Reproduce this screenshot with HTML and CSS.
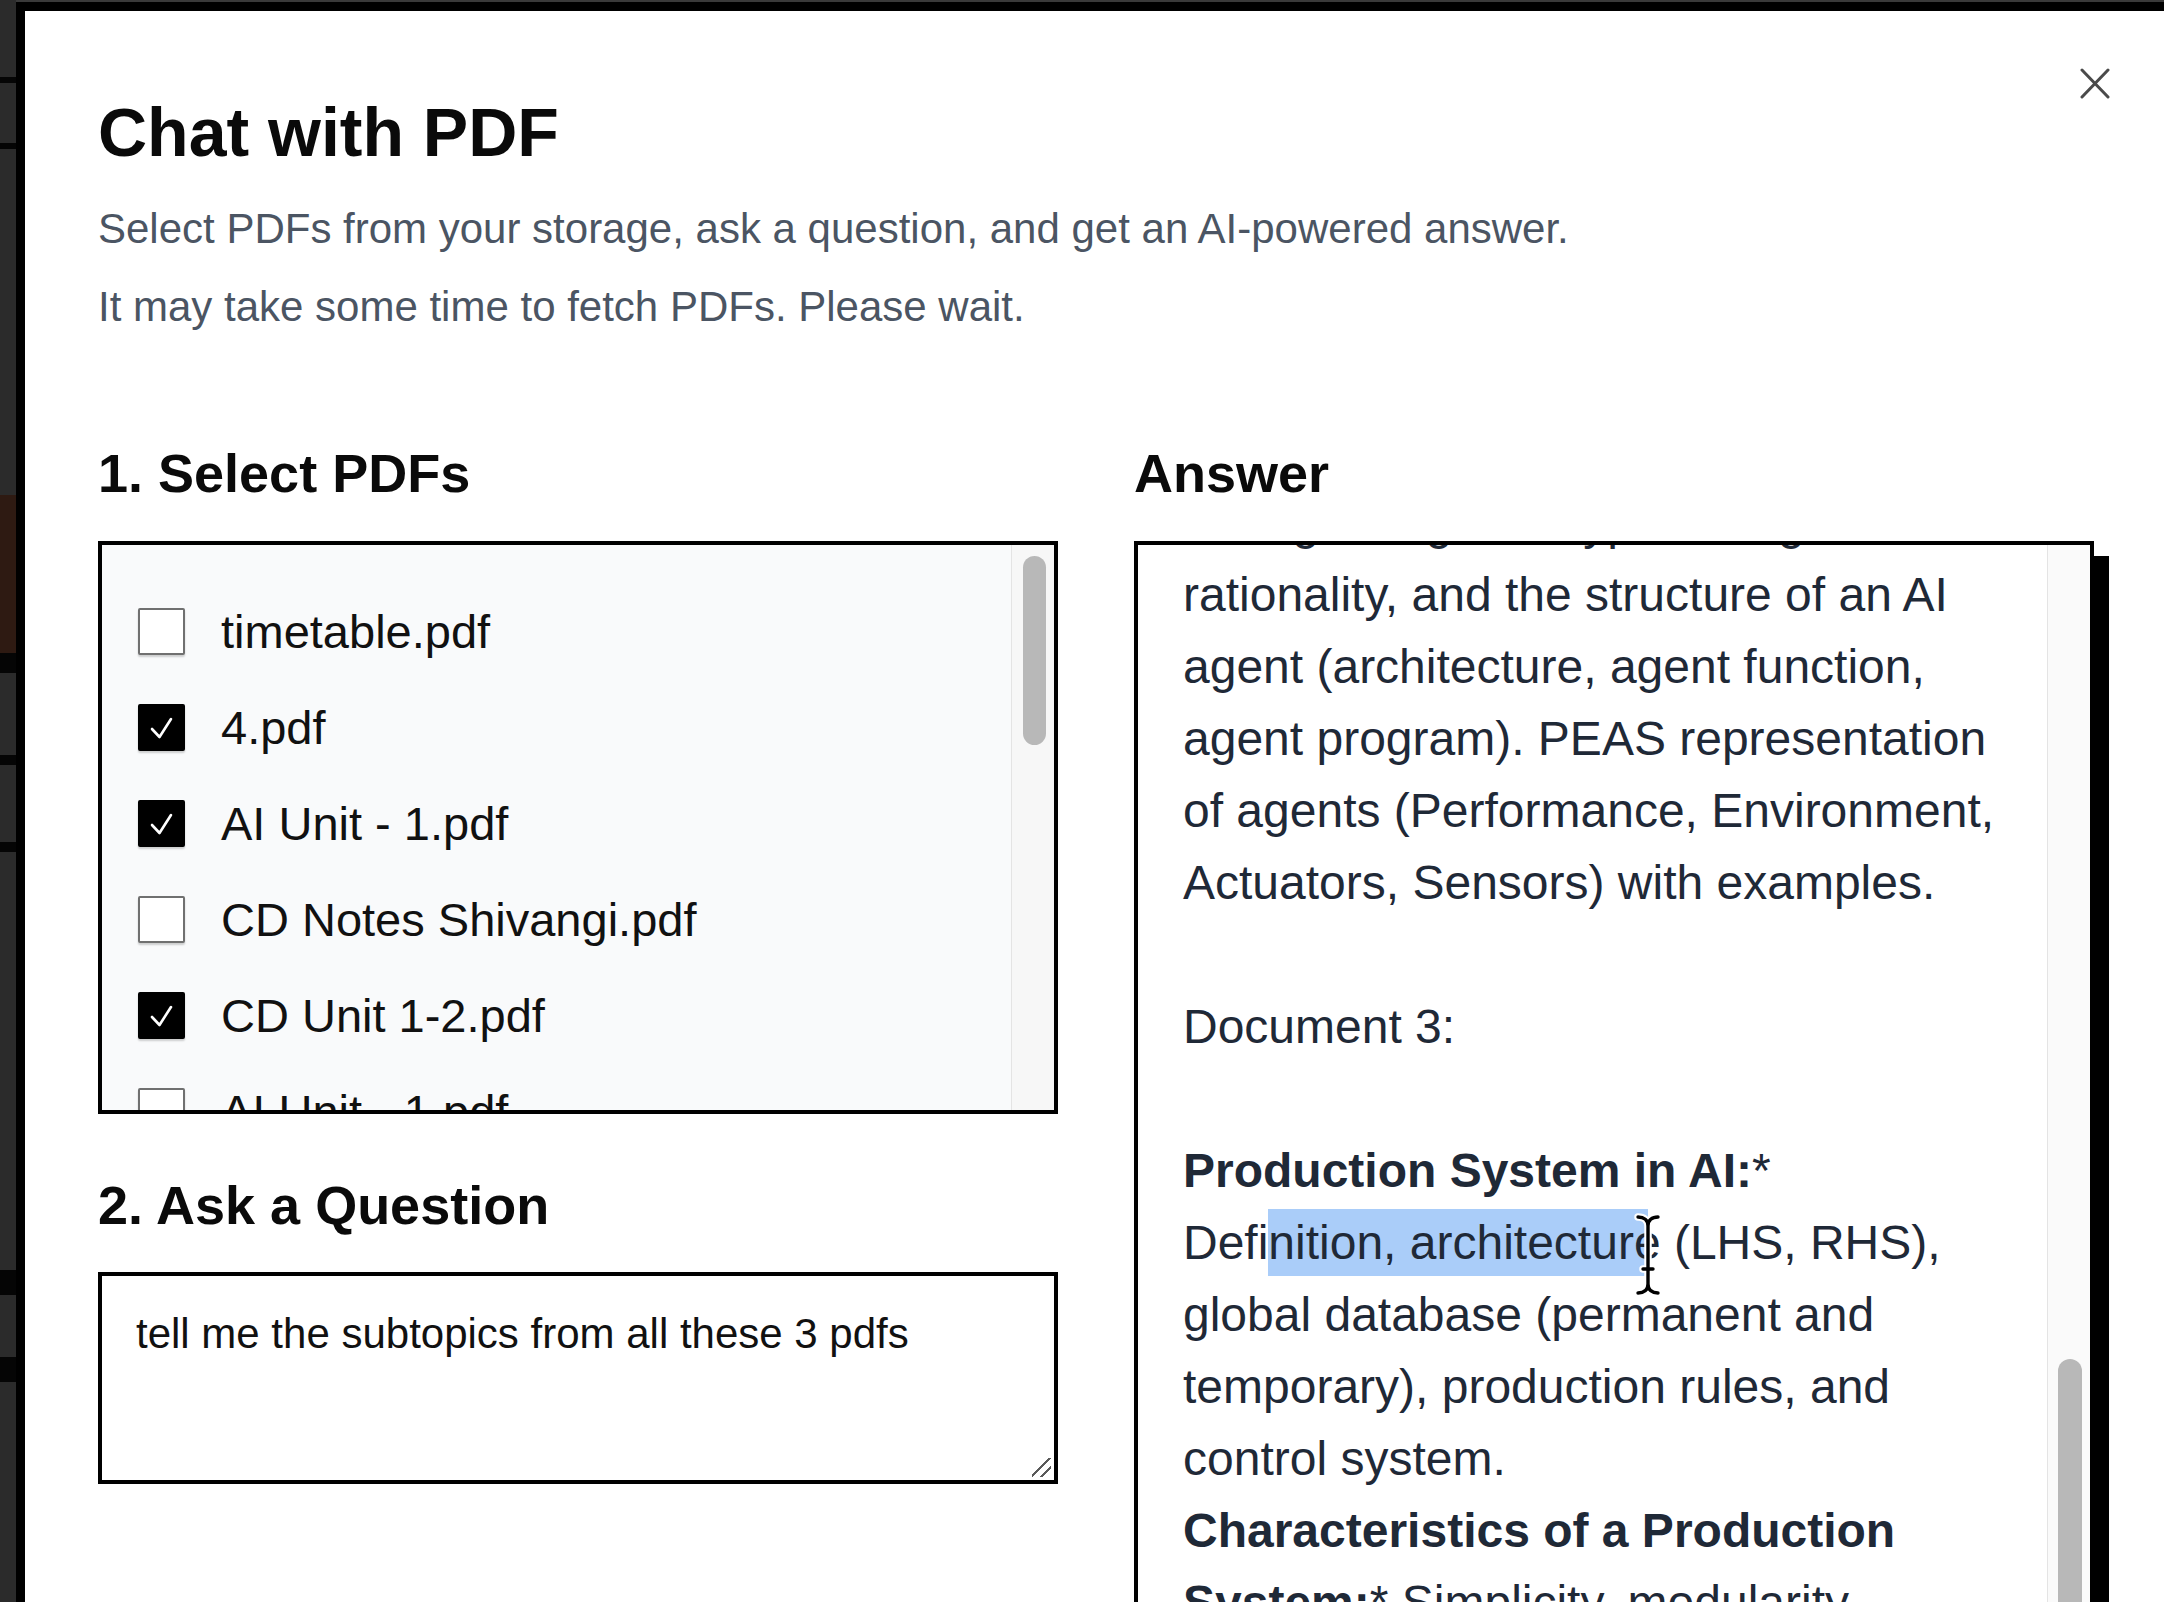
FILE: index.html
```html
<!DOCTYPE html>
<html lang="en">
<head>
<meta charset="utf-8">
<title>Chat with PDF</title>
<link rel="stylesheet" href="styles.css">
</head>
<body>
<div class="page">
  <div class="side"></div>
  <div class="modal">
    <svg class="close" viewBox="0 0 30 31" aria-label="Close">
      <path d="M2 2 L28 29 M28 2 L2 29" stroke="#4a4a4a" stroke-width="3" stroke-linecap="round" fill="none"/>
    </svg>
    <h1 class="title">Chat with PDF</h1>
    <p class="sub sub1">Select PDFs from your storage, ask a question, and get an AI-powered answer.</p>
    <p class="sub sub2">It may take some time to fetch PDFs. Please wait.</p>

    <div class="cols">
      <div class="col">
        <h2 class="h2">1. Select PDFs</h2>
        <div class="listbox">
          <div class="items">
            <div class="item"><span class="cb"></span><span>timetable.pdf</span></div>
            <div class="item"><span class="cb on"><svg viewBox="0 0 43 43"><polyline points="12,23 19.5,31 31,13" fill="none" stroke="#fff" stroke-width="2.6" stroke-linecap="round" stroke-linejoin="round"/></svg></span><span>4.pdf</span></div>
            <div class="item"><span class="cb on"><svg viewBox="0 0 43 43"><polyline points="12,23 19.5,31 31,13" fill="none" stroke="#fff" stroke-width="2.6" stroke-linecap="round" stroke-linejoin="round"/></svg></span><span>AI Unit - 1.pdf</span></div>
            <div class="item"><span class="cb"></span><span>CD Notes Shivangi.pdf</span></div>
            <div class="item"><span class="cb on"><svg viewBox="0 0 43 43"><polyline points="12,23 19.5,31 31,13" fill="none" stroke="#fff" stroke-width="2.6" stroke-linecap="round" stroke-linejoin="round"/></svg></span><span>CD Unit 1-2.pdf</span></div>
            <div class="item"><span class="cb"></span><span>AI Unit - 1.pdf</span></div>
            <div class="item"><span class="cb"></span><span>CD Unit 3.pdf</span></div>
          </div>
          <div class="track"><div class="thumb"></div></div>
        </div>

        <h2 class="h2 second">2. Ask a Question</h2>
        <div class="ask-wrap">
          <textarea class="ask">tell me the subtopics from all these 3 pdfs</textarea>
        </div>
      </div>

      <div class="col">
        <h2 class="h2">Answer</h2>
        <div class="answerbox">
          <div class="answer-body">
<div class="answer-text">intelligent agents, types of agents,
rationality, and the structure of an AI
agent (architecture, agent function,
agent program). PEAS representation
of agents (Performance, Environment,
Actuators, Sensors) with examples.

Document 3:

<b>Production System in AI:</b>*
Defi<span class="sel">nition, architectur</span>e (LHS, RHS),
global database (permanent and
temporary), production rules, and
control system.
<b>Characteristics of a Production
System:</b>* Simplicity, modularity,
adaptability, and efficiency.</div>
          </div>
          <div class="track"><div class="thumb"></div></div>
          <svg class="cursor" viewBox="0 0 30 86">
            <path d="M5 5 C11 5 15 8 15 14 C15 8 19 5 25 5 M15 14 V72 M5 81 C11 81 15 78 15 72 C15 78 19 81 25 81 M10 57 H20" stroke="#fff" stroke-width="7.5" fill="none" stroke-linecap="round"/>
            <path d="M5 5 C11 5 15 8 15 14 C15 8 19 5 25 5 M15 14 V72 M5 81 C11 81 15 78 15 72 C15 78 19 81 25 81 M10 57 H20" stroke="#000" stroke-width="3.4" fill="none" stroke-linecap="round"/>
          </svg>
        </div>
      </div>
    </div>
  </div>
</div>
</body>
</html>
```

FILE: styles.css
```css
* { box-sizing: border-box; }

html, body {
  margin: 0;
  padding: 0;
}

body {
  background: #3a3a3a;
  overflow: hidden;
  font-family: "Liberation Sans", Arial, Helvetica, sans-serif;
}

.page {
  display: flex;
  width: 2164px;
  height: 1602px;
  overflow: hidden;
}

.side {
  width: 16px;
  flex: none;
  background: linear-gradient(to bottom,
    #2b2b2b 0 77px, #050505 77px 83px, #2b2b2b 83px 143px,
    #050505 143px 149px, #2b2b2b 149px 495px, #2e1a12 495px 653px,
    #050505 653px 673px, #2b2b2b 673px 755px, #050505 755px 765px,
    #2b2b2b 765px 842px, #050505 842px 852px, #2b2b2b 852px 1270px,
    #050505 1270px 1295px, #2b2b2b 1295px 1357px, #050505 1357px 1382px,
    #2b2b2b 1382px);
}

.modal {
  flex: none;
  width: 2148px;
  height: 1700px;
  margin-top: 2px;
  background: #fff;
  border-left: 9px solid #000;
  border-top: 9px solid #000;
  padding: 80px 0 0 73px;
  position: relative;
}

.close {
  position: absolute;
  top: 57px;
  right: 54px;
  width: 30px;
  height: 31px;
}

.title {
  margin: 0;
  font-size: 68px;
  line-height: 82px;
  font-weight: 700;
  color: #0a0a0a;
}

.sub {
  margin: 0;
  font-size: 42px;
  line-height: 63px;
  color: #4b5563;
}

.sub1 { margin-top: 24px; }
.sub2 { margin-top: 15px; }

.cols {
  display: grid;
  grid-template-columns: 960px 960px;
  column-gap: 76px;
  margin-top: 103px;
  align-items: start;
}

.col {
  display: flex;
  flex-direction: column;
}

.h2 {
  margin: 0 0 35px;
  font-size: 54px;
  line-height: 65px;
  font-weight: 700;
  color: #0a0a0a;
}

.h2.second {
  margin-top: 59px;
  margin-bottom: 34px;
}

.listbox {
  height: 573px;
  border: 4px solid #000;
  background: #f9fafb;
  display: flex;
  overflow: hidden;
}

.items {
  flex: 1;
  padding: 38px 0 0 36px;
  overflow: hidden;
}

.item {
  height: 96px;
  flex: none;
  display: flex;
  align-items: center;
  gap: 36px;
  font-size: 47px;
  color: #111;
  white-space: nowrap;
}

.cb {
  width: 47px;
  height: 47px;
  flex: none;
  display: flex;
  background: #fff;
  border: 2px solid #707070;
  border-radius: 2px;
  box-shadow: 0 2px 2px rgba(0, 0, 0, 0.18);
}

.cb.on {
  background: #000;
  border-color: #000;
}

.cb svg {
  width: 43px;
  height: 43px;
}

.track {
  width: 43px;
  flex: none;
  background: #f7f7f7;
  border-left: 1px solid #e4e4e4;
}

.thumb {
  width: 23px;
  margin-left: 11px;
  background: #b8b8b8;
  border-radius: 12px;
}

.listbox .thumb {
  margin-top: 11px;
  height: 189px;
}

.ask-wrap {
  position: relative;
  width: 960px;
}

.ask-wrap::after {
  content: "";
  position: absolute;
  right: 7px;
  bottom: 7px;
  width: 19px;
  height: 19px;
  background: linear-gradient(135deg,
    transparent 0 44%, #5a5a5a 44% 51%, transparent 51% 70%,
    #5a5a5a 70% 77%, transparent 77%);
  pointer-events: none;
}

.ask {
  display: block;
  width: 960px;
  height: 212px;
  border: 4px solid #000;
  border-radius: 0;
  padding: 34px;
  font-family: "Liberation Sans", Arial, Helvetica, sans-serif;
  font-size: 42px;
  color: #111;
  background: #fff;
  outline: none;
  margin: 0;
  resize: none;
}

.answerbox {
  height: 1170px;
  border: 4px solid #000;
  box-shadow: 15px 15px 0 #000;
  background: #fff;
  display: flex;
  position: relative;
}

.answer-body {
  flex: 1;
  overflow: hidden;
  padding-left: 45px;
}

.answer-text {
  margin-top: -58px;
  white-space: pre;
  font-size: 48px;
  line-height: 72px;
  color: #1f2937;
}

.answer-text b {
  font-weight: 700;
}

.sel {
  background: #aacdf9;
  padding: 7px 0;
  box-shadow: 14px 0 0 #aacdf9;
}

.answerbox .track {
  background: #fafafa;
}

.answerbox .thumb {
  margin-top: 814px;
  height: 420px;
  width: 24px;
  margin-left: 10px;
}

.cursor {
  position: absolute;
  left: 495px;
  top: 667px;
  width: 30px;
  height: 86px;
}
```
